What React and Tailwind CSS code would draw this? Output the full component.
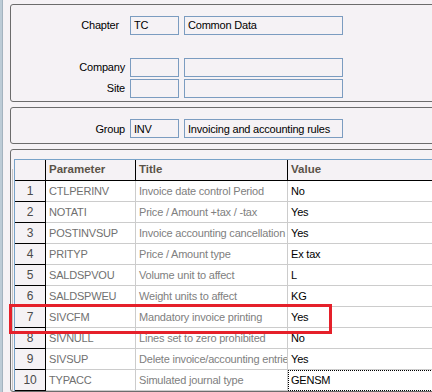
import React from "react";

const rows = [
  ["1", "CTLPERINV", "Invoice date control Period", "No"],
  ["2", "NOTATI", "Price / Amount +tax / -tax", "Yes"],
  ["3", "POSTINVSUP", "Invoice accounting cancellation", "Yes"],
  ["4", "PRITYP", "Price / Amount type", "Ex tax"],
  ["5", "SALDSPVOU", "Volume unit to affect", "L"],
  ["6", "SALDSPWEU", "Weight units to affect", "KG"],
  ["7", "SIVCFM", "Mandatory invoice printing", "Yes"],
  ["8", "SIVNULL", "Lines set to zero prohibited", "No"],
  ["9", "SIVSUP", "Delete invoice/accounting entries", "Yes"],
  ["10", "TYPACC", "Simulated journal type", "GENSM"],
];

function Field({ w, children }) {
  return (
    <div
      className={`${w} h-[19px] border border-[#7b9cc0] pl-[3px] flex items-center text-black whitespace-nowrap overflow-hidden`}
    >
      {children}
    </div>
  );
}

export default function App() {
  return (
    <div className="relative w-[432px] h-[392px] overflow-hidden bg-[#f5f2f5] flex font-['Liberation_Sans',Arial,sans-serif] text-[11px] tracking-[-0.2px]">
      {/* left stripe */}
      <div className="w-[2px] shrink-0 bg-[#bccbd6]" />
      <div className="w-[1px] shrink-0 bg-[#a3b3bf]" />

      <div className="ml-[7px] flex flex-col shrink-0 w-[440px]">
        {/* Chapter panel */}
        <div className="mt-[4px] h-[100px] border border-[#6c6c6c] rounded-[3px] pt-[11px]">
          <div className="flex items-center">
            <div className="w-[114px] pr-[6px] text-right text-black">Chapter</div>
            <div className="ml-[5px] flex gap-[5px]">
              <Field w="w-[49px]">TC</Field>
              <Field w="w-[159px]">Common Data</Field>
            </div>
          </div>
          <div className="mt-[23px] flex items-center">
            <div className="w-[114px] text-right text-black">Company</div>
            <div className="ml-[5px] flex gap-[5px]">
              <Field w="w-[49px]" />
              <Field w="w-[159px]" />
            </div>
          </div>
          <div className="mt-[2px] flex items-center">
            <div className="w-[114px] text-right text-black">Site</div>
            <div className="ml-[5px] flex gap-[5px]">
              <Field w="w-[49px]" />
              <Field w="w-[159px]" />
            </div>
          </div>
        </div>

        {/* Group panel */}
        <div className="mt-[5px] h-[37px] border border-[#6c6c6c] rounded-[3px] pt-[11px]">
          <div className="flex items-center">
            <div className="w-[114px] text-right text-black">Group</div>
            <div className="ml-[5px] flex gap-[5px]">
              <Field w="w-[49px]">INV</Field>
              <Field w="w-[159px]">Invoicing and accounting rules</Field>
            </div>
          </div>
        </div>

        {/* Table panel */}
        <div className="mt-[5px] flex-1 border border-[#6c6c6c] rounded-[3px] pt-[9px] pl-[1px] flex">
          <div className="w-[1px] shrink-0 mt-[10px] bg-[#c4c4c4]" />
          <div className="ml-[1px] flex-1 border-l border-t border-[#78a2c8]">
            {/* header */}
            <div className="flex h-[21px] border-b border-black font-bold text-[#5b5348] text-[11.5px] tracking-normal">
              <div className="w-[31px] shrink-0 border-r border-black" />
              <div className="w-[90px] shrink-0 border-r border-black pl-[3px] flex items-center">Parameter</div>
              <div className="w-[152px] shrink-0 border-r border-black pl-[3px] flex items-center">Title</div>
              <div className="flex-1 pl-[3px] flex items-center">Value</div>
            </div>
            {rows.map(([n, p, t, v]) => (
              <div key={n} className="flex h-[21px]">
                <div className="w-[31px] shrink-0 border-r border-b border-black flex items-center justify-center text-[#4a4a4a] text-[12px]">
                  {n}
                </div>
                <div className="w-[90px] shrink-0 border-r border-b border-[#cccccc] bg-white pl-[3px] flex items-center text-[#707070] whitespace-nowrap overflow-hidden">
                  {p}
                </div>
                <div className="w-[152px] shrink-0 border-r border-b border-[#cccccc] bg-white pl-[3px] flex items-center text-[#808080] whitespace-nowrap overflow-hidden">
                  {t}
                </div>
                {n === "10" ? (
                  <div className="flex-1 border border-dotted border-black bg-white pl-[2px] flex items-center text-black">
                    {v}
                  </div>
                ) : (
                  <div className="flex-1 border-b border-[#cccccc] bg-white pl-[3px] flex items-center text-black">
                    {v}
                  </div>
                )}
              </div>
            ))}
          </div>
        </div>
      </div>

      {/* highlight */}
      <div className="absolute left-[9px] top-[304px] w-[323px] h-[30px] border-[3px] border-[#e5202a] pointer-events-none" />
    </div>
  );
}
